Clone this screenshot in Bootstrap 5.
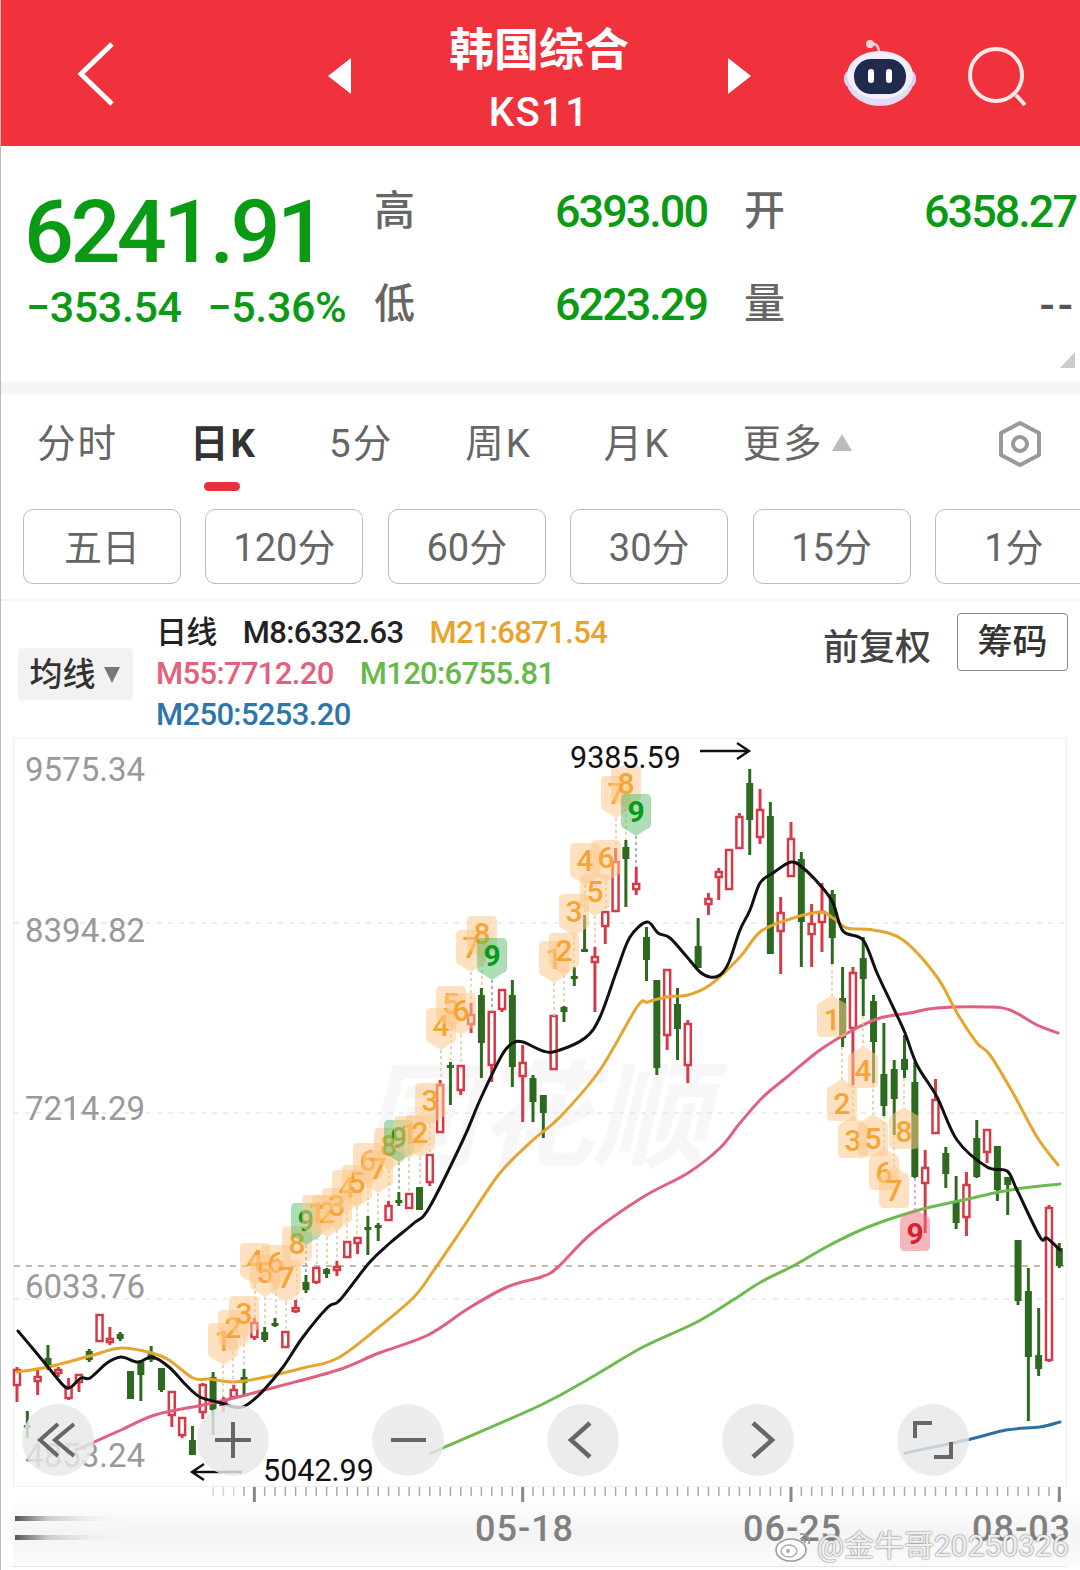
<!DOCTYPE html>
<html lang="zh-CN">
<head>
    <meta charset="UTF-8">
    <title>韩国综合 KS11</title>
    <link href="https://cdn.jsdelivr.net/npm/bootstrap@5.3.2/dist/css/bootstrap.min.css" rel="stylesheet">
    <style>
        html, body { width: 1080px; height: 1570px; overflow: hidden; background: #fff; }
        body { font-family: Roboto, "Noto Sans CJK SC", sans-serif; }
        .page-wrap { width: 1080px; height: 1570px; position: relative; overflow: hidden; border-left: 1px solid #bbb; }

        /* header */
        .top-bar { height: 146px; background: #f0323c; color: #fff; margin-left: -1px; }
        .back-icon { margin-left: 77px; margin-top: 2px; }
        .arrow-left { margin-left: 213px; margin-top: 6px; }
        .title-box { width: 200px; margin-left: 88px; text-align: center; }
        .title-cn { font-size: 45px; font-weight: 700; line-height: 54px; margin-top: 24px; }
        .title-code { font-size: 40px; font-weight: 500; line-height: 44px; margin-top: 13px; letter-spacing: 1.4px; }
        .arrow-right { margin-left: 89px; margin-top: 6px; }
        .robot-icon { margin-left: 93px; margin-top: -2px; }
        .search-icon { margin-left: 51px; margin-top: 12px; }

        /* quote */
        .quote-box { height: 236px; padding-top: 36px; position: relative; }
        .quote-left { width: 374px; padding-left: 23px; color: #0a9a14; }
        .price-big { font-size: 88px; font-weight: 500; line-height: 92px; letter-spacing: -3.6px; margin-top: 4px; }
        .price-chg { font-size: 43px; font-weight: 500; line-height: 50px; margin-top: 4px; margin-left: 2px; letter-spacing: -.4px; gap: 26px; }
        .stat-grid { grid-template-columns: 332px 331px; column-gap: 38px; row-gap: 33px; }
        .stat-cell { height: 60px; align-items: center; }
        .stat-label { font-size: 41px; font-weight: 500; color: #666; margin-left: -1px; }
        .stat-val { font-size: 45px; font-weight: 500; color: #0a9a14; letter-spacing: -2px; }
        .stat-none { color: #555; letter-spacing: 3px; }
        .corner-mark { position: absolute; right: 5px; bottom: 14px; border-left: 15px solid transparent; border-bottom: 16px solid #ccc; }
        .gray-band { height: 12px; background: #f5f5f5; }

        /* tabs */
        .tab-row { height: 115px; padding: 24px 0 0 36px; gap: 72px; position: relative; }
        .tab-item { font-size: 38.5px; color: #666; line-height: 52px; position: relative; white-space: nowrap; letter-spacing: 2px; }
        .tab-on { color: #333; font-weight: 700; }
        .tab-on::after { content: ""; position: absolute; left: 14px; top: 64px; width: 36px; height: 9px; border-radius: 5px; background: #e8303a; }
        .more-tri { display: inline-block; margin-left: 8px; vertical-align: 6px; border-left: 10px solid transparent; border-right: 10px solid transparent; border-bottom: 17px solid #bbb; }
        .gear-icon { position: absolute; left: 995px; top: 27px; }

        /* period buttons */
        .period-row { height: 92px; padding-left: 22px; gap: 24.4px; border-bottom: 2px solid #f3f3f3; overflow: hidden; }
        .period-btn { flex: 0 0 158px; height: 75px; border: 1px solid #bbb; border-radius: 10px; background: #fff; font-size: 38px; color: #666; line-height: 1; padding: 2px 0 0; }

        /* legend */
        .legend-box { height: 137px; position: relative; }
        .ma-drop { position: absolute; left: 17px; top: 47px; width: 115px; height: 52px; background: #f2f2f2; border-radius: 4px; font-size: 33px; font-weight: 500; color: #333; gap: 8px; padding-top: 2px; padding-right: 2px; }
        .ma-tri { border-left: 8px solid transparent; border-right: 8px solid transparent; border-top: 16px solid #777; }
        .legend-lines { position: absolute; left: 155px; top: 11px; font-size: 31px; font-weight: 500; line-height: 41px; letter-spacing: -.65px; white-space: nowrap; }
        .legend-lines span { margin-right: 26px; }
        .c-dark { color: #222; }
        .c-orange { color: #e9a32a; }
        .c-pink { color: #e4607c; }
        .c-green { color: #66b94a; }
        .c-blue { color: #2f76a8; }
        .fq-text { position: absolute; left: 822px; top: 24px; font-size: 36px; font-weight: 500; color: #444; line-height: 46px; }
        .chip-btn { position: absolute; left: 956px; top: 12px; width: 111px; height: 58px; border: 1px solid #888; border-radius: 4px; background: #fff; font-size: 35px; font-weight: 500; color: #333; padding: 0; line-height: 1; }

        /* chart */
        .chart-box { height: 832px; position: relative; }
        .chart-box svg.chart-svg { display: block; position: absolute; left: -1px; top: 0; }
        .chart-svg text { font-family: Roboto, "Noto Sans CJK SC", sans-serif; }
        .zoom-bar { position: absolute; left: 21px; top: 666px; gap: 103px; }
        .zoom-btn { width: 72px; height: 72px; border-radius: 50%; background: rgba(232, 232, 232, .82); }
        .wb-mark { position: absolute; left: 774px; top: 785px; gap: 4px; font-size: 30px; color: rgba(255, 255, 255, .9); text-shadow: 0 0 2px #777, 0 0 1px #888; white-space: nowrap; }
    </style>
</head>
<body>

<div class="page-wrap">
    <!-- Top bar -->
    <div class="top-bar d-flex align-items-center">
        <svg class="back-icon" width="38" height="66" viewBox="0 0 38 66"><polyline points="35,3 4,33 35,63" fill="none" stroke="#fff" stroke-width="5"/></svg>
        <svg class="arrow-left" width="23" height="36" viewBox="0 0 23 36"><polygon points="23,0 0,18 23,36" fill="#fff"/></svg>
        <div class="title-box align-self-start">
            <div class="title-cn">韩国综合</div>
            <div class="title-code">KS11</div>
        </div>
        <svg class="arrow-right" width="23" height="36" viewBox="0 0 23 36"><polygon points="0,0 23,18 0,36" fill="#fff"/></svg>
        <svg class="robot-icon" width="72" height="68" viewBox="0 0 72 68">
            <path d="M26 10 C28 3 34 6 35 13" fill="none" stroke="#f3c9d2" stroke-width="2.5"/>
            <circle cx="26" cy="6" r="4" fill="#f7d5dc"/>
            <ellipse cx="36" cy="41" rx="34" ry="27" fill="#e4dcf5"/>
            <rect x="0" y="32" width="72" height="18" rx="8" fill="#d9d2f2"/>
            <ellipse cx="36" cy="37" rx="33" ry="24" fill="#f3eefb"/>
            <rect x="10" y="21" width="52" height="35" rx="17" fill="#1f2a4d"/>
            <rect x="24" y="31" width="6" height="14" rx="3" fill="#fff"/>
            <rect x="42" y="31" width="6" height="14" rx="3" fill="#fff"/>
        </svg>
        <svg class="search-icon" width="62" height="66" viewBox="0 0 62 66"><circle cx="29" cy="29" r="26" fill="none" stroke="#ffe9e9" stroke-width="4"/><line x1="49" y1="49" x2="58" y2="59" stroke="#ffe9e9" stroke-width="4"/></svg>
    </div>

    <!-- Quote -->
    <div class="quote-box d-flex">
        <div class="quote-left">
            <div class="price-big">6241.91</div>
            <div class="price-chg d-flex"><span>−353.54</span><span>−5.36%</span></div>
        </div>
        <div class="stat-grid d-grid align-content-start">
            <div class="stat-cell d-flex justify-content-between"><span class="stat-label">高</span><span class="stat-val">6393.00</span></div>
            <div class="stat-cell d-flex justify-content-between"><span class="stat-label">开</span><span class="stat-val">6358.27</span></div>
            <div class="stat-cell d-flex justify-content-between"><span class="stat-label">低</span><span class="stat-val">6223.29</span></div>
            <div class="stat-cell d-flex justify-content-between"><span class="stat-label">量</span><span class="stat-val stat-none">--</span></div>
        </div>
        <div class="corner-mark"></div>
    </div>
    <div class="gray-band"></div>

    <!-- Tabs -->
    <div class="tab-row d-flex">
        <div class="tab-item">分时</div>
        <div class="tab-item tab-on">日K</div>
        <div class="tab-item">5分</div>
        <div class="tab-item">周K</div>
        <div class="tab-item">月K</div>
        <div class="tab-item">更多<span class="more-tri"></span></div>
        <svg class="gear-icon" width="48" height="46" viewBox="0 0 48 46">
            <polygon points="24,2 43,12 43,34 24,44 5,34 5,12" fill="none" stroke="#999" stroke-width="4" stroke-linejoin="round"/>
            <circle cx="24" cy="23" r="7" fill="none" stroke="#999" stroke-width="4"/>
        </svg>
    </div>

    <!-- Periods -->
    <div class="period-row d-flex">
        <button class="period-btn" type="button">五日</button>
        <button class="period-btn" type="button">120分</button>
        <button class="period-btn" type="button">60分</button>
        <button class="period-btn" type="button">30分</button>
        <button class="period-btn" type="button">15分</button>
        <button class="period-btn" type="button">1分</button>
    </div>

    <!-- Legend -->
    <div class="legend-box">
        <div class="ma-drop d-flex align-items-center justify-content-center">均线<span class="ma-tri"></span></div>
        <div class="legend-lines">
            <div><span class="c-dark">日线</span><span class="c-dark">M8:6332.63</span><span class="c-orange">M21:6871.54</span></div>
            <div><span class="c-pink">M55:7712.20</span><span class="c-green">M120:6755.81</span></div>
            <div><span class="c-blue">M250:5253.20</span></div>
        </div>
        <div class="fq-text">前复权</div>
        <button class="chip-btn" type="button">筹码</button>
    </div>

    <!-- Chart -->
    <div class="chart-box">
        <svg class="chart-svg" id="chart" width="1080" height="832" viewBox="0 738 1080 832" xmlns="http://www.w3.org/2000/svg"></svg>

        <div class="zoom-bar d-flex">
            <div class="zoom-btn"><svg width="72" height="72" viewBox="0 0 72 72"><polyline points="36,20 18,36 36,52" fill="none" stroke="#666" stroke-width="4"/><polyline points="52,20 33,36 52,52" fill="none" stroke="#666" stroke-width="4"/></svg></div>
            <div class="zoom-btn"><svg width="72" height="72" viewBox="0 0 72 72"><path d="M18 36H54M36 18V54" fill="none" stroke="#666" stroke-width="4"/></svg></div>
            <div class="zoom-btn"><svg width="72" height="72" viewBox="0 0 72 72"><path d="M19 36H54" fill="none" stroke="#666" stroke-width="4"/></svg></div>
            <div class="zoom-btn"><svg width="72" height="72" viewBox="0 0 72 72"><polyline points="43,19 24,36 43,53" fill="none" stroke="#666" stroke-width="4.5"/></svg></div>
            <div class="zoom-btn"><svg width="72" height="72" viewBox="0 0 72 72"><polyline points="31,19 50,36 31,53" fill="none" stroke="#666" stroke-width="4.5"/></svg></div>
            <div class="zoom-btn"><svg width="72" height="72" viewBox="0 0 72 72"><path d="M18 34V19H35M37 53H54V38" fill="none" stroke="#666" stroke-width="4"/></svg></div>
        </div>

        <div class="wb-mark d-flex align-items-center">
            <svg width="38" height="34" viewBox="0 0 38 34">
                <ellipse cx="16" cy="21" rx="15" ry="11" fill="#fff" stroke="#999" stroke-width="1.5"/>
                <ellipse cx="14" cy="22" rx="8" ry="6" fill="none" stroke="#aaa" stroke-width="1.5"/>
                <circle cx="13" cy="22" r="2" fill="#aaa"/>
                <path d="M25 5C31 4 35 9 34 15M25 10C28 9 30 11 30 14" fill="none" stroke="#999" stroke-width="1.8"/>
            </svg>
            <span>@金牛哥20250326</span>
        </div>
    </div>
</div>

<script>
    const NS = "http://www.w3.org/2000/svg";
    const chart = document.getElementById("chart");

    function add(tag, attrs, text) {
        const el = document.createElementNS(NS, tag);
        for (const k in attrs) el.setAttribute(k, attrs[k]);
        if (text !== undefined) el.textContent = text;
        chart.appendChild(el);
        return el;
    }
    const xOf = i => 17 + i * 10.32;

    // "x,y x,y ..." to a smooth path (catmull-rom)
    function smooth(str) {
        const p = str.split(" ").map(s => s.split(",").map(Number));
        let d = `M${p[0][0]} ${p[0][1]}`;
        for (let i = 0; i < p.length - 1; i++) {
            const a = p[i - 1] || p[i], b = p[i], c = p[i + 1], e = p[i + 2] || c;
            const c1 = [b[0] + (c[0] - a[0]) / 6, b[1] + (c[1] - a[1]) / 6];
            const c2 = [c[0] - (e[0] - b[0]) / 6, c[1] - (e[1] - b[1]) / 6];
            d += `C${c1[0].toFixed(1)} ${c1[1].toFixed(1)} ${c2[0].toFixed(1)} ${c2[1].toFixed(1)} ${c[0]} ${c[1]}`;
        }
        return d;
    }

    // color, wick top, body top, body bottom, wick bottom
    const candles = [
        ["r",1367,1370,1385,1402],["g",1411,1425,1427,1438],["r",1370,1377,1381,1395],["g",1345,1358,1367,1370],
        ["r",1367,1370,1373,1377],["r",1378,1387,1398,1400],["r",1375,1375,1382,1392],["g",1349,1351,1360,1362],
        ["r",1315,1315,1341,1341],["r",1327,1339,1342,1345],["g",1332,1334,1339,1341],["g",1371,1371,1399,1399],
        ["g",1362,1362,1375,1401],["g",1346,1353,1360,1362],["g",1368,1368,1390,1392],["r",1391,1392,1415,1427],
        ["r",1417,1418,1435,1438],["g",1426,1440,1455,1455],["r",1383,1385,1412,1419],["g",1372,1377,1410,1435],
        ["r",1397,1402,1404,1412],["r",1385,1390,1397,1398],["g",1369,1377,1383,1396],["r",1318,1323,1337,1340],
        ["g",1327,1332,1340,1342],["g",1318,1323,1326,1327],["r",1332,1332,1347,1347],["r",1300,1308,1310,1313],
        ["g",1275,1282,1290,1293],["r",1267,1268,1282,1284],["g",1268,1269,1274,1278],["r",1261,1267,1270,1276],
        ["r",1242,1242,1257,1257],["r",1237,1238,1243,1254],["g",1216,1227,1229,1255],["g",1223,1225,1228,1241],
        ["r",1201,1206,1220,1220],["g",1192,1200,1203,1206],["r",1193,1194,1208,1209],["g",1187,1187,1210,1210],
        ["r",1155,1155,1182,1186],["r",1080,1085,1132,1132],["g",1062,1065,1067,1105],["r",1065,1066,1090,1095],
        ["r",1003,1015,1024,1033],["g",988,995,1043,1078],["r",1012,1012,1065,1082],["r",990,990,1009,1012],
        ["g",980,995,1067,1087],["r",1045,1063,1076,1122],["g",1075,1078,1102,1122],["g",1095,1095,1113,1138],
        ["r",1016,1016,1069,1069],["g",1006,1007,1012,1022],["g",967,976,979,986],["g",915,949,951,951],
        ["r",947,957,962,1012],["r",912,912,926,944],["r",848,862,911,911],["g",840,847,859,907],
        ["r",867,884,889,895],["g",927,937,960,981],["g",980,980,1068,1075],["r",969,970,1035,1050],
        ["g",988,1004,1029,1060],["r",1020,1024,1065,1083],["g",918,946,968,968],["r",893,899,904,915],
        ["r",868,872,877,900],["r",850,850,889,890],["r",813,817,848,849],["g",769,783,820,855],
        ["r",789,810,837,844],["g",802,816,954,954],["r",897,913,931,974],["r",822,839,876,876],
        ["g",852,859,922,967],["r",904,924,934,967],["r",883,912,922,952],["g",890,894,938,964],
        ["g",967,998,1038,1047],["r",967,973,1028,1085],["g",937,958,979,1016],["g",995,1001,1042,1083],
        ["g",1023,1074,1106,1116],["g",1060,1069,1099,1135],["g",1035,1059,1070,1078],["g",1062,1082,1177,1178],
        ["r",1150,1168,1183,1233],["r",1079,1100,1133,1133],["g",1147,1153,1174,1188],["g",1176,1202,1223,1229],
        ["r",1172,1185,1217,1236],["g",1120,1138,1177,1178],["r",1130,1130,1152,1163],["g",1146,1146,1190,1201],
        ["g",1177,1177,1185,1215],["g",1240,1240,1301,1305],["g",1268,1291,1357,1421],["g",1308,1355,1369,1376],
        ["r",1205,1208,1360,1362],["g",1243,1248,1266,1268]
    ];

    const maLines = [
        ["#6dbb4f", "431,1453 541,1405 592,1377 643,1347 695,1323 733,1300 761,1282 795,1265 830,1245 868,1227 919,1210 968,1199 999,1192 1023,1188 1060,1184"],
        ["#2d6f9f", "905,1453 971,1439 1006,1430 1040,1427 1060,1422"],
        ["#e0607e", "76,1450 121,1430 155,1415 203,1405 234,1398 276,1387 338,1370 379,1353 428,1335 469,1308 507,1287 541,1277 557,1268 592,1233 643,1197 688,1173 720,1148 740,1123 763,1097 787,1077 820,1050 853,1030 880,1018 910,1013 937,1008 987,1007 1010,1010 1037,1025 1058,1033"],
        ["#e5a52e", "17,1372 48,1367 90,1356 121,1348 152,1353 169,1360 193,1378 210,1379 234,1382 266,1377 303,1368 338,1358 379,1327 414,1297 434,1270 466,1223 500,1173 533,1140 560,1117 600,1070 637,1007 648,1002 667,997 688,995 710,985 740,957 760,932 787,920 820,912 833,918 847,928 873,930 903,940 937,977 957,1013 977,1043 990,1055 1013,1093 1037,1137 1058,1165"],
        ["#111111", "18,1331 34,1350 48,1367 64,1386 71,1387 81,1378 90,1378 107,1363 121,1357 138,1362 152,1357 169,1367 186,1385 200,1397 221,1403 234,1407 245,1406 262,1392 283,1367 303,1337 328,1307 340,1300 369,1263 390,1243 414,1223 429,1208 463,1140 480,1100 502,1055 513,1043 523,1042 543,1051 557,1051 585,1038 600,1017 617,970 630,937 647,922 658,933 670,938 687,957 700,972 710,977 720,975 729,962 740,930 750,910 760,883 773,873 791,862 803,868 820,885 833,903 843,931 863,940 877,973 893,1007 905,1033 917,1065 937,1097 957,1140 987,1167 1007,1171 1017,1190 1040,1237 1047,1238 1060,1250"]
    ];

    // number, x, y, kind (o orange, g green, p red), dir (d tip down, u tip up)
    const badges = [
        [1,223,1340,"o","d"],[2,233,1327,"o","d"],[3,244,1313,"o","d"],[4,255,1260,"o","d"],[5,265,1272,"o","d"],[6,276,1262,"o","d"],
        [7,286,1277,"o","d"],[8,297,1243,"o","d"],[9,306,1220,"g","d"],[1,317,1212,"o","d"],[2,327,1212,"o","d"],[3,337,1205,"o","d"],
        [4,347,1187,"o","d"],[5,357,1182,"o","d"],[6,368,1160,"o","d"],[7,378,1168,"o","d"],[8,389,1145,"o","d"],[9,399,1137,"g","d"],
        [1,409,1133,"o","d"],[2,420,1132,"o","d"],[3,430,1100,"o","d"],[4,441,1025,"o","d"],[5,451,1003,"o","d"],[6,461,1010,"o","d"],
        [7,471,947,"o","d"],[8,482,933,"o","d"],[9,492,955,"g","d"],[1,554,958,"o","d"],[2,564,950,"o","d"],[3,574,911,"o","d"],
        [4,585,860,"o","d"],[5,595,891,"o","d"],[6,606,857,"o","d"],[7,616,793,"o","d"],[8,626,783,"o","d"],[9,636,811,"g","d"],
        [1,832,1019,"o","u"],[2,842,1103,"o","u"],[3,853,1140,"o","u"],[4,863,1070,"o","u"],[5,873,1138,"o","u"],[6,884,1172,"o","u"],
        [7,894,1190,"o","u"],[8,904,1131,"o","u"],[9,915,1233,"p","u"]
    ];
    const badgeStyle = {
        o: { bg: "rgba(253,200,140,.55)", num: "#f4a534", dash: "#e6c8a0", weight: 500 },
        g: { bg: "rgba(70,180,90,.45)", num: "#0b9a16", dash: "#7fa890", weight: 700 },
        p: { bg: "rgba(240,110,125,.5)", num: "#d9202e", dash: "#c9a0b8", weight: 700 }
    };

    const defs = add("defs", {});
    defs.innerHTML =
        '<linearGradient id="bandFill" x1="0" y1="0" x2="0" y2="1"><stop offset="0" stop-color="#fff"/><stop offset=".5" stop-color="#f4f4f4"/><stop offset="1" stop-color="#fbfbfb"/></linearGradient>' +
        '<linearGradient id="streakFill" x1="0" y1="0" x2="1" y2="0"><stop offset="0" stop-color="#555"/><stop offset=".3" stop-color="#ccc"/><stop offset="1" stop-color="#f4f4f4" stop-opacity="0"/></linearGradient>';

    // frame and bottom band
    add("rect", { x: 13.5, y: 738.5, width: 1053, height: 748, fill: "#fff", stroke: "#eee" });
    add("rect", { x: 13, y: 1500, width: 1067, height: 66, fill: "url(#bandFill)" });
    add("line", { x1: 13, y1: 1566.5, x2: 1066, y2: 1566.5, stroke: "#e6e6e6" });
    add("rect", { x: 15, y: 1516, width: 110, height: 5, fill: "url(#streakFill)" });
    add("rect", { x: 15, y: 1535, width: 110, height: 5, fill: "url(#streakFill)" });

    // watermark
    add("text", { x: 535, y: 1158, "text-anchor": "middle", "font-size": 116, "font-weight": 700, "font-style": "italic", fill: "#f7f7f7" }, "同花顺");

    // grid
    [923, 1113, 1299].forEach(y => add("line", { x1: 14, y1: y, x2: 1066, y2: y, stroke: "#e8e8e8", "stroke-dasharray": "5 6", "stroke-width": 1.5 }));
    add("line", { x1: 14, y1: 1266, x2: 1066, y2: 1266, stroke: "#b3a78f", "stroke-dasharray": "6 6", "stroke-width": 1.5 });

    // candles
    candles.forEach((c, i) => {
        const x = xOf(i);
        const col = c[0] === "r" ? "#d63a48" : "#2d6a1f";
        add("line", { x1: x, y1: c[1], x2: x, y2: c[4], stroke: col, "stroke-width": 3 });
        if (c[0] === "r") {
            add("rect", { x: x - 3, y: c[2], width: 6, height: Math.max(c[3] - c[2], 3), fill: "#fff", stroke: col, "stroke-width": 2.5 });
        } else {
            add("rect", { x: x - 3.5, y: c[2], width: 7, height: Math.max(c[3] - c[2], 3), fill: col });
        }
    });

    // moving averages
    maLines.forEach(l => add("path", { d: smooth(l[1]), fill: "none", stroke: l[0], "stroke-width": 3, "stroke-linejoin": "round", "stroke-linecap": "round" }));

    // sequence badges, dashes first so they stay behind the tags
    badges.forEach(b => {
        const s = badgeStyle[b[3]];
        const c = candles[Math.round((b[1] - 17) / 10.32)];
        const y1 = b[4] === "d" ? b[2] + 25 : c[4];
        const y2 = b[4] === "d" ? c[1] : b[2] - 23;
        if (y2 > y1) add("line", { x1: b[1], y1: y1, x2: b[1], y2: y2, stroke: s.dash, "stroke-dasharray": "3 3", "stroke-width": 1.5 });
    });
    badges.forEach(b => {
        const s = badgeStyle[b[3]];
        const x = b[1], y = b[2];
        const d = b[4] === "d"
            ? `M${x - 10} ${y - 17}h20q5 0 5 5v25q0 4 -4 5l-11 7 -11 -7q-4 -1 -4 -5v-25q0 -5 5 -5z`
            : `M${x - 10} ${y + 18}h20q5 0 5 -5v-25q0 -4 -4 -5l-11 -7 -11 7q-4 1 -4 5v25q0 5 5 5z`;
        add("path", { d: d, fill: s.bg });
        add("text", { x: x, y: y + 11, "text-anchor": "middle", "font-size": 30, "font-weight": s.weight, fill: s.num }, b[0]);
    });

    // axis labels
    [["9575.34", 781], ["8394.82", 942], ["7214.29", 1120], ["6033.76", 1298], ["4853.24", 1467]].forEach(a =>
        add("text", { x: 25, y: a[1], "font-size": 33, fill: "#999" }, a[0]));

    // high and low marks
    add("text", { x: 570, y: 768, "font-size": 30.5, fill: "#111" }, "9385.59");
    add("path", { d: "M700 751H748M737 743L749 751L737 759", fill: "none", stroke: "#111", "stroke-width": 2.4 });
    add("text", { x: 263, y: 1481, "font-size": 30.5, fill: "#111" }, "5042.99");
    add("path", { d: "M242 1472H193M204 1464L192 1472L204 1480", fill: "none", stroke: "#111", "stroke-width": 2.4 });

    // ticks along the time axis
    for (let i = 19; i <= 101; i++) {
        const major = (i - 23) % 26 === 0;
        const x = xOf(i);
        add("line", { x1: x, y1: 1487, x2: x, y2: major ? 1502 : 1496, stroke: major ? "#888" : "#aaa", "stroke-width": major ? 3 : 1.5, opacity: i < 22 ? .5 : 1 });
    }

    // dates
    [["05-18", 475], ["06-25", 743], ["08-03", 972]].forEach(d =>
        add("text", { x: d[1], y: 1541, "font-size": 36, "font-weight": 500, fill: "#808080", "letter-spacing": 1 }, d[0]));
</script>

<script src="https://cdn.jsdelivr.net/npm/bootstrap@5.3.2/dist/js/bootstrap.bundle.min.js"></script>
</body>
</html>
